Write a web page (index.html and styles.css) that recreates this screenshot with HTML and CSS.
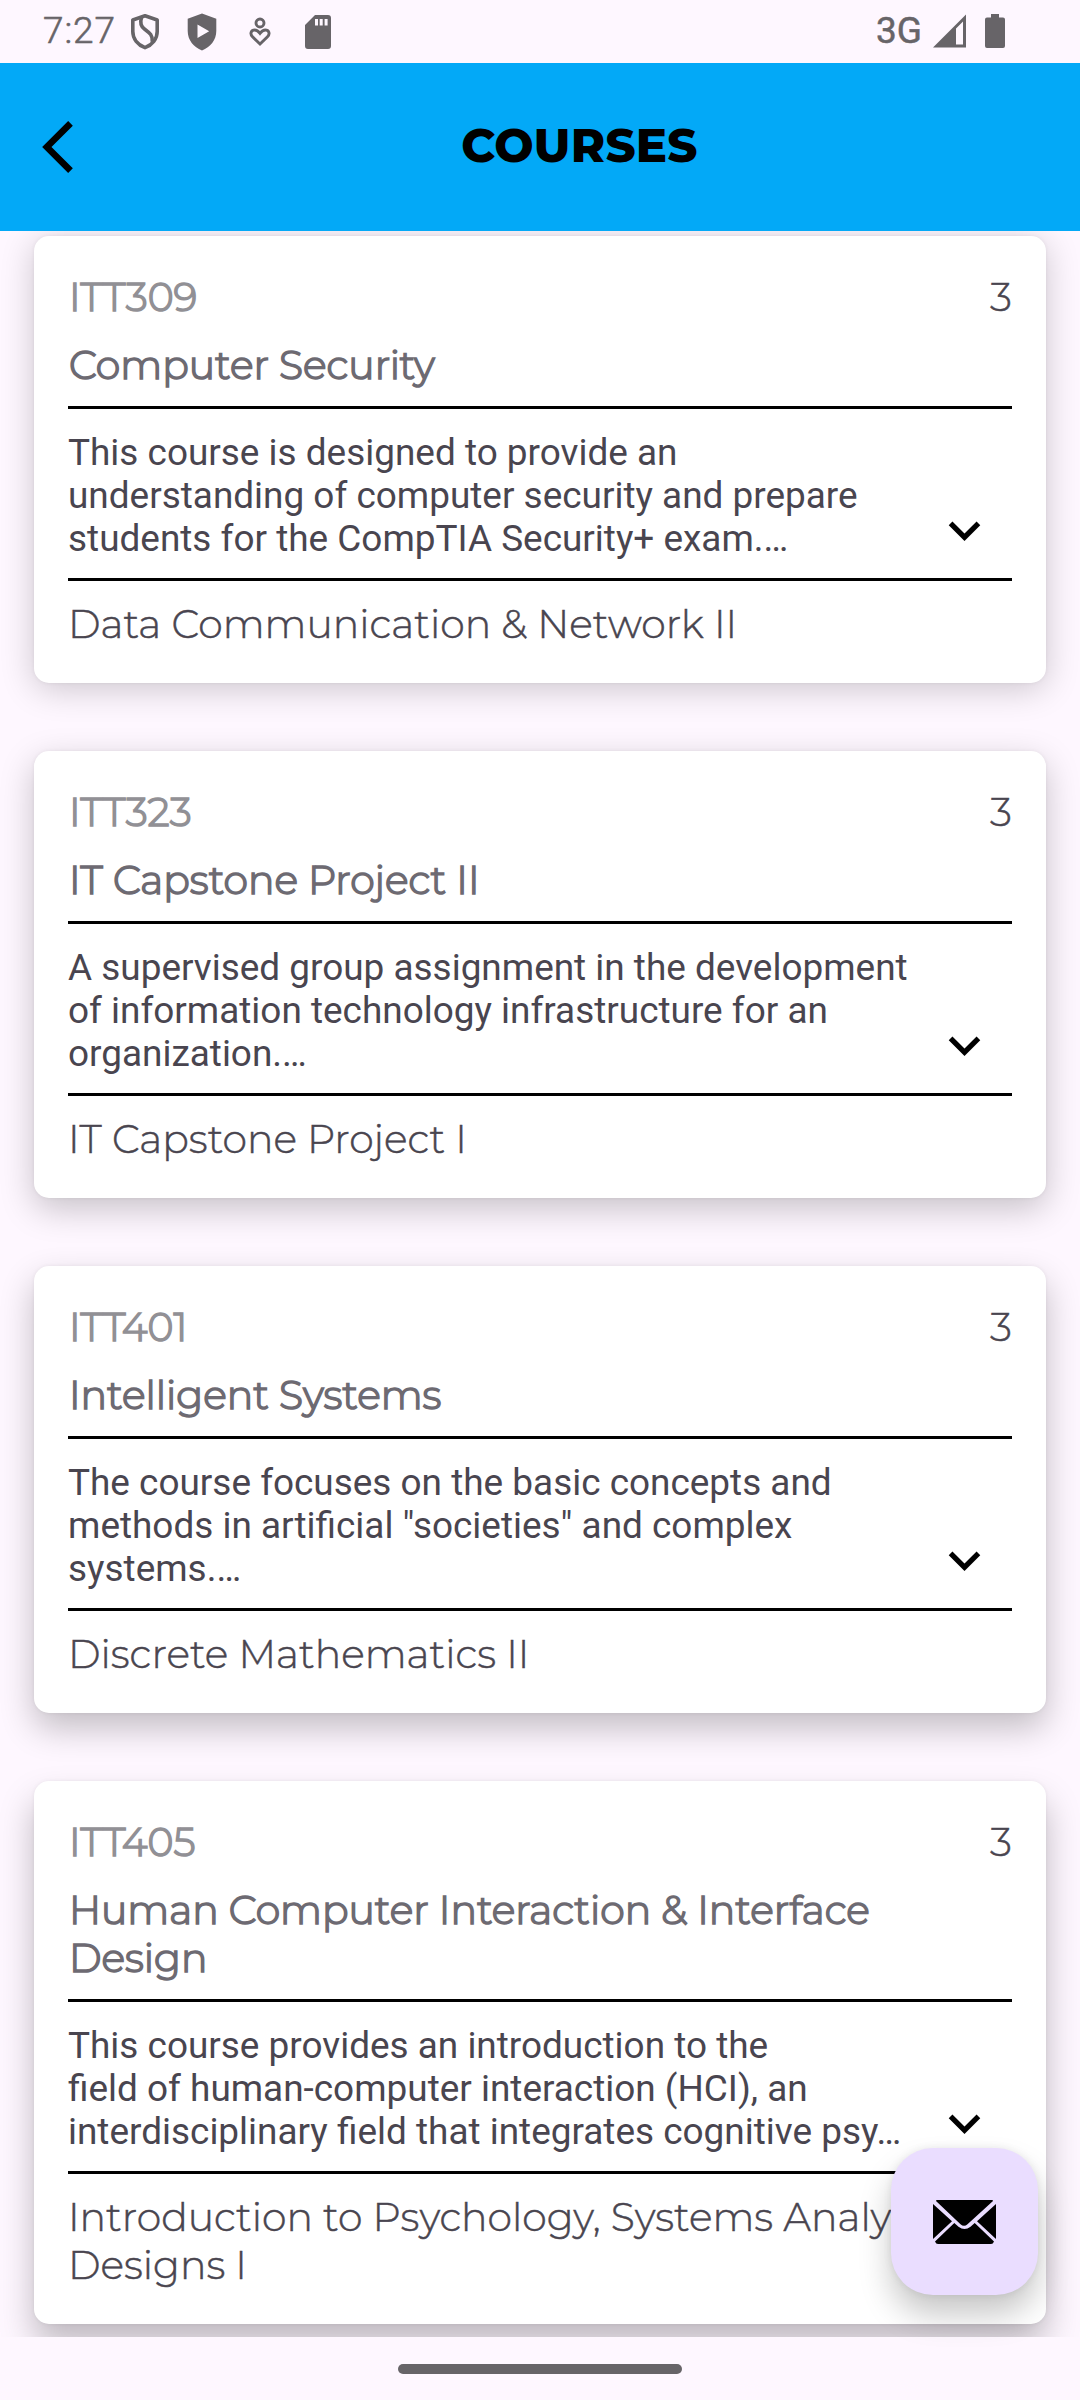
FILE: index.html
```html
<!DOCTYPE html>
<html lang="en">
<head>
<meta charset="utf-8">
<title>Courses</title>
<link rel="stylesheet" href="styles.css">
</head>
<body>
<div class="screen">
  <div class="status-bar">
    <span class="clock">7:27</span>
    <svg class="status-icon shield" width="30" height="37" viewBox="0 0 30 37" fill="none" stroke="currentColor" stroke-width="3.6" stroke-linejoin="round"><path d="M15 2.8 27.2 7v11.500c0 7.400-5 13.300-12.200 16.200C7.800 31.800 2.800 25.900 2.800 18.500V7z"/><path d="M11.500 4.500c-1.600 5-.6 9 3.200 11.800 4.300 3.200 8.300 5.500 7.600 12.700"/></svg>
    <svg class="status-icon play" width="30" height="38" viewBox="0 0 30 38" fill="currentColor"><path fill-rule="evenodd" d="M15 .5 29.300 5.800V18c0 9.300-6 16-14.300 19.500C6.700 34 .7 27.300.7 18V5.800zM10.500 11.500v13.600L22.200 18.300z"/></svg>
    <svg class="status-icon care" width="22" height="30" viewBox="0 0 22 30" fill="none" stroke="currentColor" stroke-width="2.900"><circle cx="11" cy="6" r="4"/><path d="M11 27 3.500 19.700C.5 16.700 2.200 13 5.700 13c2.300 0 3.700 1.200 5.300 3.300C12.600 14.200 14 13 16.300 13c3.500 0 5.200 3.700 2.200 6.700z"/></svg>
    <svg class="status-icon card-icon" width="26" height="34" viewBox="0 0 26 34" fill="currentColor"><path fill-rule="evenodd" d="M10 0h13a3 3 0 0 1 3 3v28a3 3 0 0 1-3 3H3a3 3 0 0 1-3-3V10zM10 4v6.500h3V4zM14.700 4v6.500h3V4zM19.600 4v6.500h3V4z"/></svg>
    <span class="network">3G</span>
    <svg class="status-icon signal" width="33" height="34" viewBox="0 0 33 34" fill="currentColor"><path fill-rule="evenodd" d="M33 .5V33.500H0zM23 14.500V30.500h7V7.500z"/></svg>
    <svg class="status-icon battery" width="20" height="34" viewBox="0 0 20 34" fill="currentColor"><path d="M6 0h8v3.500h4a2 2 0 0 1 2 2V32a2 2 0 0 1-2 2H2a2 2 0 0 1-2-2V5.500a2 2 0 0 1 2-2h4z"/></svg>
  </div>

  <header class="app-bar">
    <svg class="back" width="31" height="52" viewBox="0 0 11.670 19.800"><path d="M11.670 1.770 9.900 0 0 9.900l9.900 9.900 1.770-1.770L3.540 9.900z"/></svg>
    <h1 class="app-title">COURSES</h1>
  </header>

  <main class="course-list">
    <article class="course depth-1">
      <div class="course-head"><span class="code">ITT309</span><span class="credits">3</span></div>
      <h2 class="name">Computer Security</h2>
      <div class="summary">
        <p class="description">This course is designed to provide an<br>understanding of computer security and prepare<br>students for the CompTIA Security+ exam.…</p>
        <svg class="expand" width="63" height="63" viewBox="0 0 24 24"><path d="M16.590 8.590 12 13.170 7.410 8.590 6 10l6 6 6-6z"/></svg>
      </div>
      <p class="prerequisite">Data Communication &amp; Network II</p>
    </article>

    <article class="course depth-2">
      <div class="course-head"><span class="code">ITT323</span><span class="credits">3</span></div>
      <h2 class="name">IT Capstone Project II</h2>
      <div class="summary">
        <p class="description">A supervised group assignment in the development<br>of information technology infrastructure for an<br>organization.…</p>
        <svg class="expand" width="63" height="63" viewBox="0 0 24 24"><path d="M16.590 8.590 12 13.170 7.410 8.590 6 10l6 6 6-6z"/></svg>
      </div>
      <p class="prerequisite">IT Capstone Project I</p>
    </article>

    <article class="course depth-3">
      <div class="course-head"><span class="code">ITT401</span><span class="credits">3</span></div>
      <h2 class="name">Intelligent Systems</h2>
      <div class="summary">
        <p class="description">The course focuses on the basic concepts and<br>methods in artificial "societies" and complex<br>systems.…</p>
        <svg class="expand" width="63" height="63" viewBox="0 0 24 24"><path d="M16.590 8.590 12 13.170 7.410 8.590 6 10l6 6 6-6z"/></svg>
      </div>
      <p class="prerequisite">Discrete Mathematics II</p>
    </article>

    <article class="course depth-4">
      <div class="course-head"><span class="code">ITT405</span><span class="credits">3</span></div>
      <h2 class="name">Human Computer Interaction &amp; Interface<br>Design</h2>
      <div class="summary">
        <p class="description">This course provides an introduction to the<br>field of human-computer interaction (HCI), an<br>interdisciplinary field that integrates cognitive psy…</p>
        <svg class="expand" width="63" height="63" viewBox="0 0 24 24"><path d="M16.590 8.590 12 13.170 7.410 8.590 6 10l6 6 6-6z"/></svg>
      </div>
      <p class="prerequisite">Introduction to Psychology, Systems Analysis &amp;<br>Designs I</p>
    </article>
  </main>

  <div class="gesture-bar"><div class="gesture-pill"></div></div>

  <button class="mail-button" aria-label="Email">
    <svg width="63" height="44" viewBox="0 0 63 44"><path d="M4 0h55q1 0 1 1L34.500 24.300q-3.500 3-7 0L3 1Q3 0 4 0zM0 4 19 21.200 0 39zM63 4v35L44 21.200zM21.300 23 25.500 26.700q6 4.500 12 0L41.700 23 61 41.500Q60 44 58 44H5Q3 44 2 41.500z"/></svg>
  </button>
</div>
</body>
</html>
```
FILE: styles.css
```css
* { box-sizing: border-box; }

body {
  margin: 0;
  background: #fef7ff;
  color: #49454f;
  font-family: Roboto, sans-serif;
}

h1, h2, p { margin: 0; }

.screen {
  position: relative;
  display: flex;
  flex-direction: column;
  width: 1080px;
  height: 2400px;
  overflow: hidden;
}

/* Status bar */
.status-bar {
  display: flex;
  align-items: flex-start;
  height: 63px;
  padding: 0 75px 0 43px;
  color: #676468;
}

.clock, .network {
  font-size: 37px;
  line-height: 43px;
  margin-top: 9px;
}

.clock { width: 86px; font-weight: 300; letter-spacing: 0.9px; -webkit-text-stroke: 0.6px currentColor; }
.network { width: 57px; margin-left: auto; -webkit-text-stroke: 0.5px currentColor; }
.status-icon { flex: none; display: block; }
.shield { margin-top: 13px; margin-left: 1px; }
.play { margin-top: 13px; margin-left: 27px; }
.care { margin-top: 17px; margin-left: 32px; }
.card-icon { margin-top: 15px; margin-left: 34px; }
.signal { margin-top: 14px; }
.battery { margin-top: 14px; margin-left: 19px; }

/* App bar */
.app-bar {
  display: flex;
  align-items: center;
  height: 168px;
  padding-left: 42px;
  background: #03a9f7;
  color: #000;
}

.back { flex: none; }

.app-title {
  flex: 1;
  padding: 0 0 2px 6px;
  text-align: center;
  font: 800 46.500px/60px Montserrat, Inter, sans-serif;
  letter-spacing: 0.3px;
}

/* Courses */
.course-list {
  display: flex;
  flex-direction: column;
  gap: 68px;
  height: 2106px;
  padding: 5px 34px 0;
  overflow: hidden;
}

.course {
  flex: none;
  padding: 37px 34px 35px;
  background: #fff;
  border-radius: 15px;
  box-shadow: 0 0 4px rgba(0, 0, 0, 0.06), 0 var(--drop) 34px rgba(0, 0, 0, var(--shade));
}

.depth-1 { --drop: 6px; --shade: 0.2; }
.depth-2 { --drop: 11px; --shade: 0.22; }
.depth-3 { --drop: 15px; --shade: 0.24; }
.depth-4 { --drop: 20px; --shade: 0.25; }

.course-head {
  display: flex;
  justify-content: space-between;
}

.code, .name, .credits, .prerequisite {
  font: 300 39.375px/48px Montserrat, Inter, sans-serif;
}

.credits, .prerequisite { -webkit-text-stroke: 0.5px currentColor; }

.code, .name {
  padding-left: 1px;
  -webkit-text-stroke: 1.6px currentColor;
}

.code { color: #919095; }

.name {
  margin-top: 20px;
  color: #6d6a72;
}

.summary {
  display: flex;
  justify-content: space-between;
  align-items: flex-end;
  margin-top: 17px;
  padding: 22px 16px 16px 0;
  border-top: 3px solid #000;
  border-bottom: 3px solid #000;
}

.description {
  flex: none;
  font-size: 36.930px;
  line-height: 43px;
  padding-bottom: 2px;
}

.expand { display: block; flex: none; margin-left: -30px; }

.prerequisite { margin-top: 19px; white-space: nowrap; }

/* Floating mail button */
.mail-button {
  position: absolute;
  left: 891px;
  top: 2148px;
  display: flex;
  align-items: center;
  justify-content: center;
  width: 147px;
  height: 147px;
  padding: 0;
  border: 0;
  border-radius: 42px;
  background: #eaddff;
  box-shadow: 0 0 8px rgba(0, 0, 0, 0.08), 0 20px 32px rgba(0, 0, 0, 0.22);
}

/* Gesture bar */
.gesture-bar {
  display: flex;
  justify-content: center;
  align-items: flex-start;
  flex: 1;
  padding-top: 27px;
}

.gesture-pill {
  width: 284px;
  height: 10px;
  border-radius: 5px;
  background: #676468;
}
```
